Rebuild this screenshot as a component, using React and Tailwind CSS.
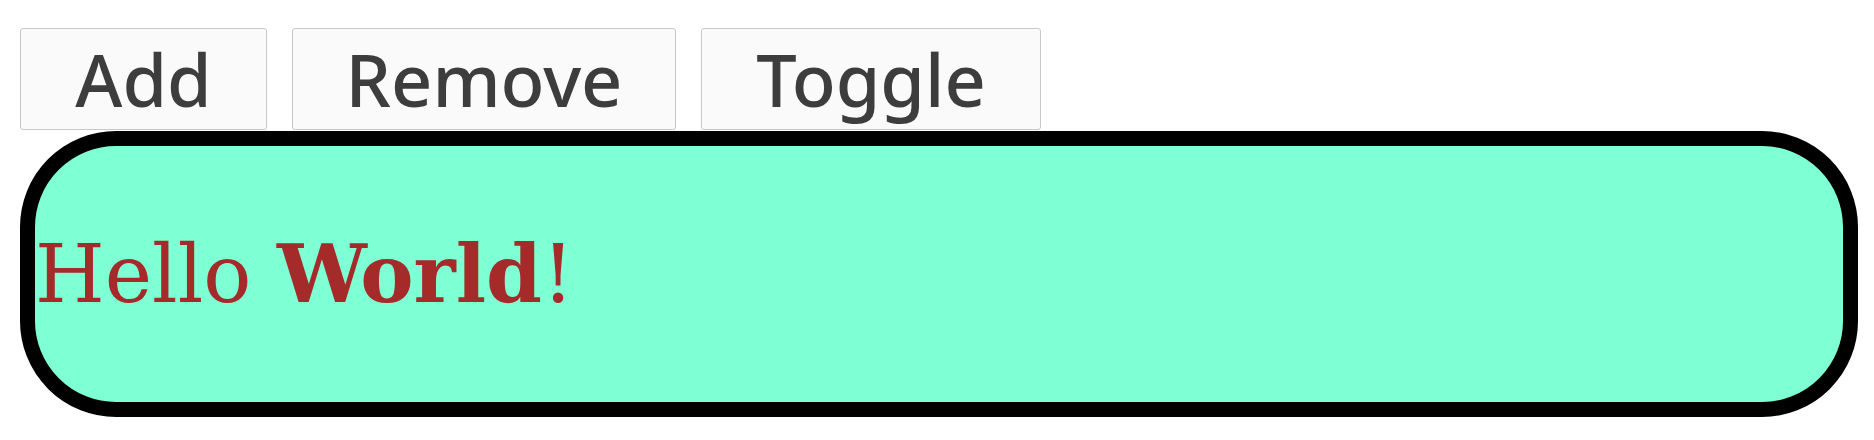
export default function App() {
  const buttons = [
    { label: 'Add', width: 'w-[247px]' },
    { label: 'Remove', width: 'w-[384px]' },
    { label: 'Toggle', width: 'w-[340px]' },
  ]

  return (
    <div className="bg-white h-[440px] pt-[28px] pl-[20px]">
      <div className="flex gap-[25px]">
        {buttons.map((b) => (
          <button
            key={b.label}
            className={`${b.width} h-[102px] flex items-center justify-center rounded-[3px] border border-[#c8c8c8] bg-[#fafafa] text-[#3d3d3d] font-['Noto_Sans',sans-serif] font-medium text-[72px] leading-none`}
          >
            {b.label}
          </button>
        ))}
      </div>
      <div className="mt-[1px] w-[1838px] h-[286px] border-[15px] border-black rounded-[96px] bg-[#7fffd4] flex items-center">
        <p className="font-['DejaVu_Serif',serif] text-[80px] leading-none text-[#a52a2a] whitespace-nowrap">
          Hello <b className="font-bold">World</b>!
        </p>
      </div>
    </div>
  )
}
